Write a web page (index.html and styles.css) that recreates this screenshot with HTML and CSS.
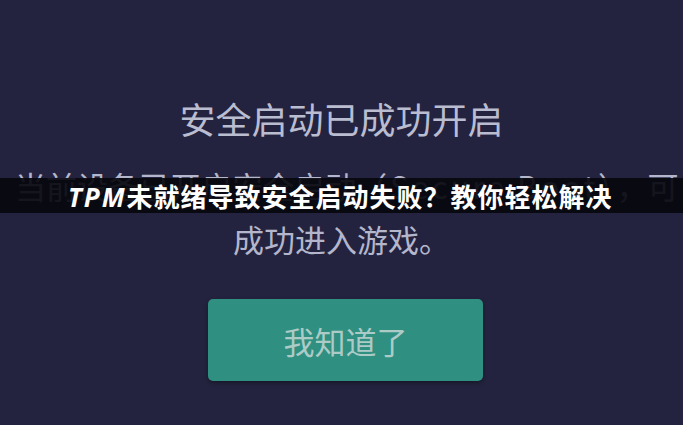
FILE: index.html
```html
<!DOCTYPE html>
<html lang="zh-CN">
  <head>
    <meta charset="UTF-8" />
    <meta name="viewport" content="width=device-width, initial-scale=1.0" />
    <title>安全启动</title>
    <link rel="stylesheet" href="styles.css">
  </head>
  <body>
    <div class="dialog">
      <h1 class="dialog-title">安全启动已成功开启</h1>

      <div class="dialog-message">
        <div class="line line-first">当前设备已开启安全启动<span class="term">（Secure Boot）</span>，可</div>
        <div class="line line-second">成功进入游戏。</div>
      </div>

      <div class="dialog-actions">
        <button type="button" class="confirm-btn">我知道了</button>
      </div>
    </div>

    <!-- caption strip laid over the dialog -->
    <div class="caption">
      <span class="caption-latin">TPM</span>未就绪导致安全启动失败？教你轻松解决
    </div>
  </body>
</html>
```

FILE: styles.css
```css
html,
body {
  margin: 0;
  padding: 0;
}

body {
  width: 683px;
  height: 425px;
  overflow: hidden;
  position: relative;
  background-color: #23233f;
  font-family: "Noto Sans CJK SC", "Noto Sans", sans-serif;
  color: #b4b6cb;
}

.dialog {
  padding-top: 98px;
}

.dialog-title {
  margin: 0;
  font-size: 36px;
  line-height: 40px;
  font-weight: 400;
  text-align: center;
  color: #babcd0;
}

.dialog-message {
  margin-top: 21px;
  font-size: 31px;
  line-height: 53px;
}

.line {
  white-space: nowrap;
}

.line-first {
  padding-left: 15px;
}

.term {
  letter-spacing: 3px;
}

.line-second {
  text-align: center;
}

.dialog-actions {
  margin-top: 34px;
  padding-left: 8px;
  display: flex;
  justify-content: center;
}

.confirm-btn {
  width: 275px;
  height: 82px;
  border: none;
  border-radius: 5px;
  background-color: #2f8f81;
  box-shadow: 0 2px 4px rgba(0, 0, 0, 0.35);
  font-family: inherit;
  font-size: 31px;
  color: #accbc6;
  cursor: pointer;
}

.caption {
  position: absolute;
  left: 0;
  right: 0;
  top: 178px;
  height: 35px;
  padding-left: 68px;
  background-color: rgba(8, 8, 14, 0.92);
  color: #ffffff;
  font-size: 26px;
  font-weight: 700;
  line-height: 35px;
  letter-spacing: 1px;
  white-space: nowrap;
}

.caption-latin {
  font-family: "Open Sans", sans-serif;
  font-style: italic;
  font-weight: 700;
  letter-spacing: 2px;
}
```
